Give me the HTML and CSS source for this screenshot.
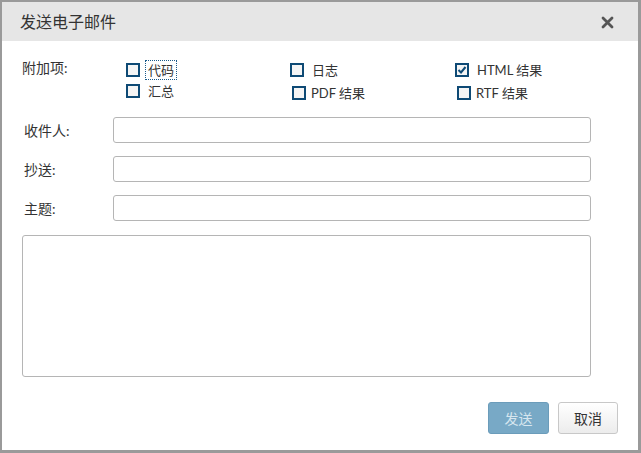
FILE: index.html
```html
<!DOCTYPE html>
<html lang="zh">
<head>
<meta charset="utf-8">
<title>发送电子邮件</title>
<link rel="stylesheet" href="styles.css">
</head>
<body>
<div class="dialog">
  <div class="header">
    <span class="title">发送电子邮件</span>
    <svg class="close" width="13" height="13" viewBox="0 0 13 13"><path d="M2 2 L11 11 M11 2 L2 11" stroke="#555" stroke-width="2.8" stroke-linecap="round"/></svg>
  </div>
  <div class="body">
    <div class="attach">
      <div class="attach-label">附加项:</div>
      <div class="checks">
        <label class="chk"><span class="box"></span><span class="txt focus">代码</span></label>
        <label class="chk"><span class="box"></span><span class="txt">日志</span></label>
        <label class="chk"><span class="box checked"><svg width="10" height="10" viewBox="0 0 10 10"><path d="M1.5 5 L4 7.5 L8.5 2" fill="none" stroke="#0e4a75" stroke-width="2"/></svg></span><span class="txt">HTML 结果</span></label>
        <label class="chk"><span class="box"></span><span class="txt">汇总</span></label>
        <label class="chk shift"><span class="box"></span><span class="txt">PDF 结果</span></label>
        <label class="chk shift"><span class="box"></span><span class="txt">RTF 结果</span></label>
      </div>
    </div>
    <div class="row"><span class="lbl">收件人:</span><span class="input"></span></div>
    <div class="row"><span class="lbl">抄送:</span><span class="input"></span></div>
    <div class="row"><span class="lbl">主题:</span><span class="input"></span></div>
    <div class="textarea"></div>
    <div class="actions">
      <span class="btn primary">发送</span>
      <span class="btn">取消</span>
    </div>
  </div>
</div>
</body>
</html>
```

FILE: styles.css
```css
html, body {
  margin: 0;
  padding: 0;
}
body {
  background: #9a9a9a;
  width: 641px;
  height: 453px;
  overflow: hidden;
  font-family: Lato, "Noto Sans CJK SC", sans-serif;
  color: #333;
  font-size: 13px;
}
.dialog {
  margin: 2px 0 0 2px;
  width: 636px;
  height: 448px;
  background: #fff;
  display: flex;
  flex-direction: column;
}
.header {
  height: 39px;
  background: #e6e6e6;
  display: flex;
  align-items: center;
  justify-content: space-between;
  padding: 0 24px 0 18px;
}
.title {
  font-size: 16px;
  color: #333;
  line-height: 20px;
  margin-top: 1px;
}
.close {
  display: block;
  margin-top: 2px;
}
.body {
  padding: 18px 20px 0 20px;
  display: flex;
  flex-direction: column;
}
.attach {
  display: flex;
}
.attach-label {
  width: 104px;
  line-height: 18px;
  font-size: 14px;
}
.checks {
  display: grid;
  grid-template-columns: 164px 165px auto;
  grid-auto-rows: 21px;
}
.chk {
  display: flex;
  align-items: flex-start;
  padding-top: 4px;
}
.chk.shift {
  padding-top: 6px;
  padding-left: 2px;
}
.box {
  width: 14px;
  height: 14px;
  box-sizing: border-box;
  border: 2px solid #0e4a75;
  background: #f5f5f5;
  display: flex;
  align-items: center;
  justify-content: center;
  flex: none;
}
.txt {
  margin-left: 7px;
  line-height: 16px;
  margin-top: -1px;
  padding: 0 1px;
  font-size: 13px;
}
.shift .txt {
  margin-left: 4px;
}
.txt.focus {
  outline: 1px dotted #1a5a8a;
  outline-offset: 1px;
}
.row {
  display: flex;
  align-items: center;
  margin-top: 13px;
}
.attach + .row {
  margin-top: 16px;
}
.lbl {
  width: 91px;
  padding-left: 2px;
  box-sizing: border-box;
  font-size: 14px;
}
.input {
  width: 478px;
  height: 26px;
  box-sizing: border-box;
  border: 1px solid #b5b5b5;
  border-radius: 3px;
  background: #fff;
}
.textarea {
  margin-top: 14px;
  width: 569px;
  height: 142px;
  box-sizing: border-box;
  border: 1px solid #b5b5b5;
  border-radius: 3px;
}
.actions {
  display: flex;
  justify-content: flex-end;
  gap: 9px;
  margin-top: 25px;
}
.btn {
  height: 32px;
  width: 60px;
  box-sizing: border-box;
  border: 1px solid #c8c8c8;
  border-radius: 3px;
  background: linear-gradient(#ffffff, #ececec);
  display: flex;
  align-items: center;
  justify-content: center;
  font-size: 14px;
  color: #333;
}
.btn.primary {
  width: 61px;
  background: #78a9c6;
  border-color: #6b9cba;
  color: #d6e6ef;
}
```
